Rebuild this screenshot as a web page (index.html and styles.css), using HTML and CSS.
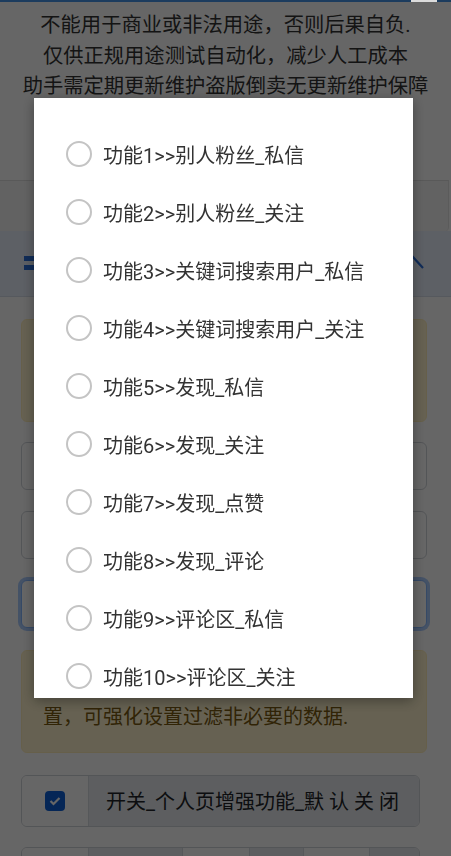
FILE: index.html
```html
<!DOCTYPE html>
<html lang="zh-CN">
<head>
<meta charset="utf-8">
<title>功能选择</title>
<link rel="stylesheet" href="styles.css">
</head>
<body>
<div class="page">
  <div class="topbar"><span class="topbtn"></span></div>
  <div class="notice">
    <p>不能用于商业或非法用途，否则后果自负.</p>
    <p>仅供正规用途测试自动化，减少人工成本</p>
    <p>助手需定期更新维护盗版倒卖无更新维护保障</p>
  </div>
  <div class="spacer"></div>
  <div class="subbox"></div>
  <div class="card-head">
    <svg class="menu-icon" width="22" height="16" viewBox="0 0 22 16"><rect x="0" y="1" width="22" height="5" fill="#2a6fdb"/><rect x="0" y="10" width="22" height="5" fill="#2a6fdb"/></svg>
    <svg class="chev" width="26" height="16" viewBox="0 0 26 16"><polyline points="2,14 13,2 24,14" fill="none" stroke="#2a6fdb" stroke-width="2.2"/></svg>
  </div>
  <div class="card-body">
    <div class="alert">请先设置好参数再启动功能，<br>运行过程中请勿操作手机.</div>
    <div class="field"></div>
    <div class="field"></div>
    <div class="field focus"></div>
    <div class="alert">数据较多时会影响运行速度，请合理设<br>置，可强化设置过滤非必要的数据.</div>
    <div class="check-row">
      <div class="addon"><span class="checkbox"><svg width="12" height="10" viewBox="0 0 12 10"><polyline points="1.5,5 4.5,8 10.5,2" fill="none" stroke="#fff" stroke-width="2.2"/></svg></span></div>
      <div class="label">开关_个人页增强功能_默 认 关 闭</div>
    </div>
    <div class="seg-row">
      <div class="seg light w67"></div>
      <div class="seg dark w94"></div>
      <div class="seg light w66"></div>
      <div class="seg dark w54"></div>
      <div class="seg light w65"></div>
      <div class="seg dark grow"></div>
    </div>
  </div>
</div>
<div class="mask"></div>
<div class="dialog">
  <ul class="options">
    <li class="option"><span class="radio"></span><span class="opt-text">功能1&gt;&gt;别人粉丝_私信</span></li>
    <li class="option"><span class="radio"></span><span class="opt-text">功能2&gt;&gt;别人粉丝_关注</span></li>
    <li class="option"><span class="radio"></span><span class="opt-text">功能3&gt;&gt;关键词搜索用户_私信</span></li>
    <li class="option"><span class="radio"></span><span class="opt-text">功能4&gt;&gt;关键词搜索用户_关注</span></li>
    <li class="option"><span class="radio"></span><span class="opt-text">功能5&gt;&gt;发现_私信</span></li>
    <li class="option"><span class="radio"></span><span class="opt-text">功能6&gt;&gt;发现_关注</span></li>
    <li class="option"><span class="radio"></span><span class="opt-text">功能7&gt;&gt;发现_点赞</span></li>
    <li class="option"><span class="radio"></span><span class="opt-text">功能8&gt;&gt;发现_评论</span></li>
    <li class="option"><span class="radio"></span><span class="opt-text">功能9&gt;&gt;评论区_私信</span></li>
    <li class="option"><span class="radio"></span><span class="opt-text">功能10&gt;&gt;评论区_关注</span></li>
    <li class="option"><span class="radio"></span><span class="opt-text">功能11&gt;&gt;评论区_点赞</span></li>
  </ul>
</div>
</body>
</html>
```

FILE: styles.css
```css
html, body {
  margin: 0;
  padding: 0;
}
body {
  width: 451px;
  height: 856px;
  overflow: hidden;
  background: #ffffff;
  font-family: Roboto, "Noto Sans CJK SC", sans-serif;
  color: #333;
}
.page {
  display: flex;
  flex-direction: column;
}
.topbar {
  height: 2px;
  background: #1c3c5e;
  display: flex;
  justify-content: flex-end;
  padding-right: 14px;
  position: relative;
  z-index: 3;
}
.topbtn {
  width: 26px;
  height: 2px;
  background: #dcdcdc;
}
.notice {
  padding-top: 8px;
  text-align: center;
  font-size: 20.3px;
  line-height: 30.5px;
  color: #333;
}
.notice p {
  margin: 0;
  white-space: nowrap;
}
.spacer {
  height: 78px;
}
.subbox {
  height: 50px;
  margin-right: 2px;
  border-top: 1px solid #dedede;
  border-right: 1px solid #e4e4e4;
  border-bottom-right-radius: 4px;
  background: #f6f6f6;
}
.card-head {
  height: 65px;
  background: #e9f0fc;
  border-bottom: 1px solid #d8dfea;
  display: flex;
  align-items: center;
  justify-content: space-between;
  padding: 0 26px 0 24px;
}
.chev {
  margin-top: -2px;
}
.card-body {
  display: flex;
  flex-direction: column;
  padding: 22px 24px 0 21px;
}
.alert {
  background: #fff3cd;
  border: 1px solid #ffeeba;
  border-radius: 6px;
  color: #7a5a10;
  font-size: 20px;
  line-height: 30px;
  padding: 21px 21px 20px 21px;
  white-space: nowrap;
  overflow: hidden;
}
.field {
  height: 46px;
  border: 1px solid #d0d4d9;
  border-radius: 6px;
  margin-top: 20px;
  background: #fff;
}
.field + .field {
  margin-top: 21px;
}
.field.focus {
  border-color: #86b7fe;
  box-shadow: 0 0 0 3px rgba(13, 110, 253, 0.35);
}
.field + .alert {
  margin-top: 22px;
}
.check-row {
  margin-top: 22px;
  width: 397px;
  height: 50px;
  border: 1px solid #d0d4d9;
  border-radius: 6px;
  display: flex;
  overflow: hidden;
}
.addon {
  width: 66px;
  display: flex;
  align-items: center;
  justify-content: center;
  background: #fff;
  border-right: 1px solid #d8dce0;
}
.checkbox {
  width: 20px;
  height: 20px;
  border-radius: 4px;
  background: #0d5fd8;
  display: flex;
  align-items: center;
  justify-content: center;
}
.label {
  flex: 1;
  background: #e9ecef;
  display: flex;
  align-items: center;
  padding-left: 17px;
  font-size: 20px;
  color: #212529;
  white-space: pre;
}
.seg-row {
  margin-top: 20px;
  width: 397px;
  height: 50px;
  border: 1px solid #d0d4d9;
  border-radius: 6px;
  display: flex;
  overflow: hidden;
}
.seg {
  border-right: 1px solid #d8dce0;
}
.seg.light { background: #fff; }
.seg.dark { background: #e9ecef; }
.w67 { width: 66px; }
.w94 { width: 93px; }
.w66 { width: 66px; }
.w54 { width: 53px; }
.w65 { width: 65px; }
.grow { flex: 1; border-right: 0; }

.mask {
  position: fixed;
  inset: 0;
  background: rgba(0, 0, 0, 0.6);
  z-index: 1;
}
.dialog {
  position: fixed;
  left: 34px;
  top: 98px;
  width: 379px;
  height: 600px;
  background: #fff;
  z-index: 2;
  overflow: hidden;
  box-shadow: 0 3px 12px rgba(0, 0, 0, 0.35);
}
.options {
  list-style: none;
  margin: 0;
  padding: 27px 0 0 32px;
}
.option {
  height: 58px;
  display: flex;
  align-items: center;
  gap: 11px;
}
.radio {
  width: 26px;
  height: 26px;
  box-sizing: border-box;
  border: 2px solid #c4c4c4;
  border-radius: 50%;
  flex: none;
}
.opt-text {
  font-size: 20px;
  color: #333;
  white-space: nowrap;
}
```
